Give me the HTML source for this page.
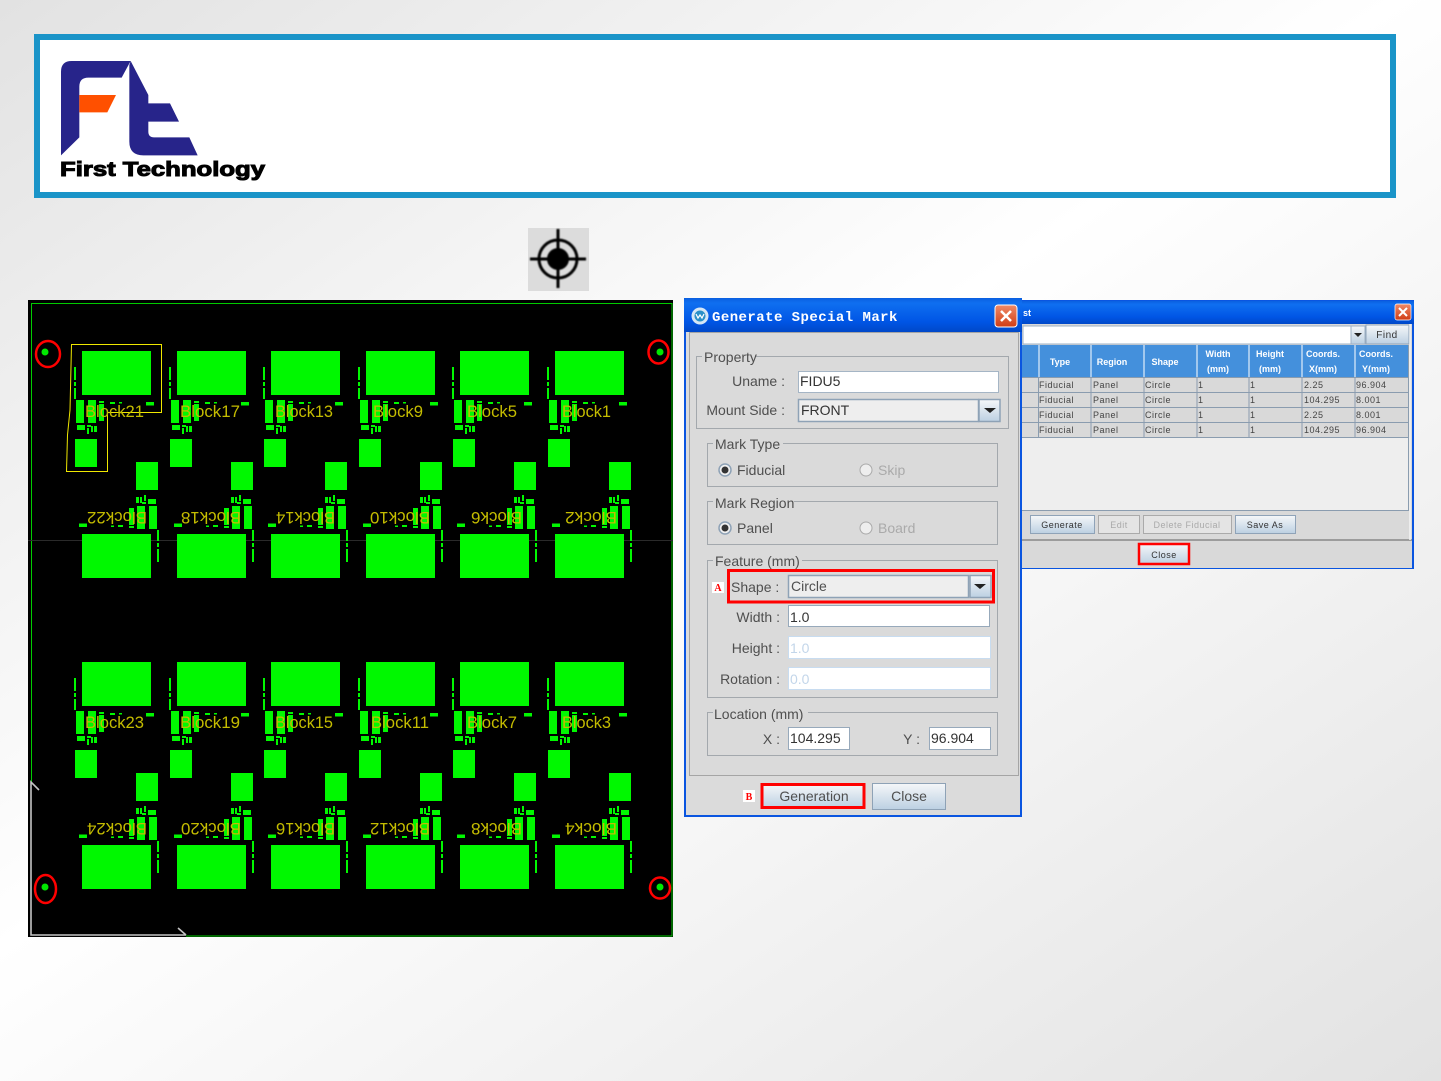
<!DOCTYPE html>
<html><head><meta charset="utf-8"><title>First Technology</title>
<style>
html,body{margin:0;padding:0;width:1441px;height:1081px;overflow:hidden;background:#fff}
svg{display:block}
text{font-family:"Liberation Sans",sans-serif}
.d{font-size:14px;fill:#4f4f4f}
.o{font-size:14px;fill:#333}
.g{font-size:14px;fill:#aaa}
.h{font-size:9px;font-weight:bold;fill:#fff;text-anchor:middle}
.c{font-size:9px;fill:#444;letter-spacing:.5px}
.b{font-size:9px;fill:#333;text-anchor:middle;letter-spacing:.5px}
.y{font-size:17px;fill:#c4bc00}
</style></head><body>
<svg width="1441" height="1081" viewBox="0 0 1441 1081" xmlns="http://www.w3.org/2000/svg">
<defs>
<linearGradient id="bg" gradientUnits="userSpaceOnUse" x1="0" y1="0" x2="957" y2="1412">
<stop offset="0" stop-color="#e2e2e2"/><stop offset=".46" stop-color="#fff"/><stop offset="1" stop-color="#e2e2e2"/>
</linearGradient>
<linearGradient id="tb" x1="0" y1="0" x2="0" y2="1"><stop offset="0" stop-color="#0a5fe0"/><stop offset=".15" stop-color="#0f6ff0"/><stop offset=".7" stop-color="#0055e5"/><stop offset="1" stop-color="#0048c8"/></linearGradient>
<linearGradient id="bt" x1="0" y1="0" x2="0" y2="1"><stop offset="0" stop-color="#f5f7f9"/><stop offset="1" stop-color="#bcd0e2"/></linearGradient>
<linearGradient id="cl" x1="0" y1="0" x2="0" y2="1"><stop offset="0" stop-color="#f08a68"/><stop offset="1" stop-color="#d03c14"/></linearGradient>
<filter id="bl"><feGaussianBlur stdDeviation=".9"/></filter>
<g id="half" fill="#00f800">
<rect x="0" y="0" width="69" height="44"/>
<rect x="-8" y="16" width="2" height="13"/><rect x="-8" y="31" width="2" height="4"/><rect x="-8" y="37" width="2" height="11"/>
<rect x="-6" y="49" width="8" height="23"/><rect x="6" y="49" width="8" height="23"/><rect x="17" y="53" width="5" height="17"/>
<rect x="17" y="50" width="5" height="2"/><rect x="28" y="51" width="5" height="2"/><rect x="37" y="51" width="3" height="1.500"/><rect x="64" y="51" width="8" height="3.500"/>
<rect x="-5" y="74" width="8" height="5"/><rect x="5" y="74" width="4" height="2"/><rect x="5" y="77" width="2" height="6"/><rect x="9" y="75" width="2" height="6"/><rect x="12" y="75" width="3" height="6"/>
<rect x="-7" y="88" width="22" height="28"/>
</g>
<g id="cell"><use href="#half"/><use href="#half" transform="rotate(180 34.500 113.500)"/></g>
</defs>

<rect width="1441" height="1081" fill="url(#bg)"/>

<!-- banner -->
<rect x="37" y="37" width="1356" height="158" fill="#fff" stroke="#1a94c8" stroke-width="6"/>
<g transform="translate(30 30) scale(.33333)">
<path fill="#27248a" d="M93 376V125Q93 93 125 93H302L275 143H175Q148 143 148 170V322Z"/>
<path fill="#27248a" d="M302 93L355 195V220H420L447 275H355V305Q355 322 372 322H478L503 376H340Q298 376 298 335V105Z"/>
<path fill="#ff5000" d="M148 195H258L232 247H148Z"/>
</g>
<text x="60" y="176" font-size="20" font-weight="bold" fill="#000" stroke="#000" stroke-width="1" textLength="205" lengthAdjust="spacingAndGlyphs">First Technology</text>

<!-- crosshair -->
<rect x="528" y="228" width="61" height="63" fill="#dcdcdc"/>
<g filter="url(#bl)" stroke="#000" fill="none">
<circle cx="558" cy="259" r="19" stroke-width="3"/>
<circle cx="558" cy="259" r="11" fill="#000" stroke="none"/>
<path d="M530 259H586M558 229V288" stroke-width="3"/>
</g>

<!-- PCB -->
<rect x="28" y="300" width="645" height="637" fill="#000"/>
<path d="M31.500 782V303.500H672V936H186" fill="none" stroke="#0c0" stroke-width="1"/>
<path d="M28 540.500H673" stroke="#2a2a2a" stroke-width="1"/>
<path d="M39 790L31 782V935H186M178 928L186 935" fill="none" stroke="#c4c4c4" stroke-width="1.600"/>
<use href="#cell" x="82" y="351"/><use href="#cell" x="177" y="351"/><use href="#cell" x="271" y="351"/><use href="#cell" x="366" y="351"/><use href="#cell" x="460" y="351"/><use href="#cell" x="555" y="351"/>
<use href="#cell" x="82" y="662"/><use href="#cell" x="177" y="662"/><use href="#cell" x="271" y="662"/><use href="#cell" x="366" y="662"/><use href="#cell" x="460" y="662"/><use href="#cell" x="555" y="662"/>
<path d="M71.500 344.500H161.500V412.500H107.500V471.500H66.500L67.500 435L70 410Z" fill="none" stroke="#f0e800" stroke-width="1"/>
<g fill="#00e800"><circle cx="45" cy="352" r="3.500"/><circle cx="660" cy="352" r="3.500"/><circle cx="45" cy="887" r="3.500"/><circle cx="660" cy="887" r="3.500"/></g>
<g fill="none" stroke="#f00" stroke-width="2.500"><ellipse cx="48" cy="354" rx="12" ry="13"/><ellipse cx="658.500" cy="352" rx="10" ry="11.500"/><ellipse cx="45.500" cy="889" rx="10.500" ry="14"/><ellipse cx="660" cy="888" rx="10" ry="10.500"/></g>
<g>
<text class="y" x="85" y="417" textLength="59" lengthAdjust="spacingAndGlyphs">Block21</text>
<text class="y" x="180" y="417" textLength="60" lengthAdjust="spacingAndGlyphs">Block17</text>
<text class="y" x="275" y="417" textLength="58" lengthAdjust="spacingAndGlyphs">Block13</text>
<text class="y" x="373" y="417" textLength="50" lengthAdjust="spacingAndGlyphs">Block9</text>
<text class="y" x="467" y="417" textLength="50" lengthAdjust="spacingAndGlyphs">Block5</text>
<text class="y" x="562" y="417" textLength="49" lengthAdjust="spacingAndGlyphs">Block1</text>
<text class="y" x="85" y="728" textLength="59" lengthAdjust="spacingAndGlyphs">Block23</text>
<text class="y" x="180" y="728" textLength="60" lengthAdjust="spacingAndGlyphs">Block19</text>
<text class="y" x="275" y="728" textLength="58" lengthAdjust="spacingAndGlyphs">Block15</text>
<text class="y" x="371" y="728" textLength="58" lengthAdjust="spacingAndGlyphs">Block11</text>
<text class="y" x="467" y="728" textLength="50" lengthAdjust="spacingAndGlyphs">Block7</text>
<text class="y" x="562" y="728" textLength="49" lengthAdjust="spacingAndGlyphs">Block3</text>
<text class="y" transform="rotate(180 147 512)" x="147" y="512" textLength="60" lengthAdjust="spacingAndGlyphs">Block22</text>
<text class="y" transform="rotate(180 241 512)" x="241" y="512" textLength="60" lengthAdjust="spacingAndGlyphs">Block18</text>
<text class="y" transform="rotate(180 335 512)" x="335" y="512" textLength="59" lengthAdjust="spacingAndGlyphs">Block14</text>
<text class="y" transform="rotate(180 430 512)" x="430" y="512" textLength="60" lengthAdjust="spacingAndGlyphs">Block10</text>
<text class="y" transform="rotate(180 522 512)" x="522" y="512" textLength="51" lengthAdjust="spacingAndGlyphs">Block6</text>
<text class="y" transform="rotate(180 617 512)" x="617" y="512" textLength="52" lengthAdjust="spacingAndGlyphs">Block2</text>
<text class="y" transform="rotate(180 147 823)" x="147" y="823" textLength="60" lengthAdjust="spacingAndGlyphs">Block24</text>
<text class="y" transform="rotate(180 241 823)" x="241" y="823" textLength="60" lengthAdjust="spacingAndGlyphs">Block20</text>
<text class="y" transform="rotate(180 335 823)" x="335" y="823" textLength="59" lengthAdjust="spacingAndGlyphs">Block16</text>
<text class="y" transform="rotate(180 430 823)" x="430" y="823" textLength="60" lengthAdjust="spacingAndGlyphs">Block12</text>
<text class="y" transform="rotate(180 522 823)" x="522" y="823" textLength="51" lengthAdjust="spacingAndGlyphs">Block8</text>
<text class="y" transform="rotate(180 617 823)" x="617" y="823" textLength="52" lengthAdjust="spacingAndGlyphs">Block4</text>
</g>

<!-- right window -->
<rect x="1022" y="300" width="392" height="269" fill="#0a55e0"/>
<rect x="1022" y="301" width="392" height="23" fill="url(#tb)"/>
<text x="1023" y="316" font-size="9" font-weight="bold" fill="#fff">st</text>
<rect x="1395" y="304" width="16" height="16" rx="2" fill="url(#cl)" stroke="#fff" stroke-width=".7"/>
<path d="M1399 308L1407 316M1407 308L1399 316" stroke="#fff" stroke-width="2"/>
<rect x="1022" y="324" width="390" height="244" fill="#d9d9d9"/>
<rect x="1023" y="326" width="328" height="18" fill="#fff" stroke="#9db0c4"/>
<rect x="1351" y="326" width="14" height="18" fill="url(#bt)" stroke="#9db0c4"/>
<path d="M1354 333H1362L1358 337Z" fill="#222"/>
<rect x="1366" y="325" width="43" height="19" fill="url(#bt)" stroke="#8fa3b8"/>
<text class="b" x="1387" y="338" style="font-size:10px">Find</text>
<rect x="1022" y="345" width="386" height="165" fill="#eee"/>
<path d="M1408.500 345V510.500H1022" fill="none" stroke="#8a9caf"/>
<rect x="1022" y="345" width="386" height="32" fill="#4490dc"/>
<rect x="1022" y="377" width="386" height="60" fill="#d9d9d9"/>
<path d="M1039 345V377M1091 345V377M1144 345V377M1197 345V377M1249 345V377M1302 345V377M1355 345V377" stroke="#fff" stroke-width="1"/>
<path d="M1038.500 377V437M1091 377V437M1144 377V437M1197 377V437M1249 377V437M1302 377V437M1355 377V437M1022 377.500H1408M1022 392.500H1408M1022 407.500H1408M1022 422.500H1408M1022 437.500H1408" stroke="#8a9caf" stroke-width="1" fill="none"/>
<text class="h" x="1060" y="365">Type</text><text class="h" x="1112" y="365">Region</text><text class="h" x="1165" y="365">Shape</text>
<text class="h" x="1218" y="357">Width</text><text class="h" x="1218" y="372">(mm)</text>
<text class="h" x="1270" y="357">Height</text><text class="h" x="1270" y="372">(mm)</text>
<text class="h" x="1323" y="357">Coords.</text><text class="h" x="1323" y="372">X(mm)</text>
<text class="h" x="1376" y="357">Coords.</text><text class="h" x="1376" y="372">Y(mm)</text>
<text class="c" x="1039" y="388">Fiducial</text><text class="c" x="1093" y="388">Panel</text><text class="c" x="1145" y="388">Circle</text><text class="c" x="1198" y="388">1</text><text class="c" x="1250" y="388">1</text><text class="c" x="1304" y="388">2.25</text><text class="c" x="1356" y="388">96.904</text>
<text class="c" x="1039" y="403">Fiducial</text><text class="c" x="1093" y="403">Panel</text><text class="c" x="1145" y="403">Circle</text><text class="c" x="1198" y="403">1</text><text class="c" x="1250" y="403">1</text><text class="c" x="1304" y="403">104.295</text><text class="c" x="1356" y="403">8.001</text>
<text class="c" x="1039" y="418">Fiducial</text><text class="c" x="1093" y="418">Panel</text><text class="c" x="1145" y="418">Circle</text><text class="c" x="1198" y="418">1</text><text class="c" x="1250" y="418">1</text><text class="c" x="1304" y="418">2.25</text><text class="c" x="1356" y="418">8.001</text>
<text class="c" x="1039" y="433">Fiducial</text><text class="c" x="1093" y="433">Panel</text><text class="c" x="1145" y="433">Circle</text><text class="c" x="1198" y="433">1</text><text class="c" x="1250" y="433">1</text><text class="c" x="1304" y="433">104.295</text><text class="c" x="1356" y="433">96.904</text>
<rect x="1030.500" y="515.500" width="64" height="18" fill="url(#bt)" stroke="#8fa3b8"/><text class="b" x="1062" y="528">Generate</text>
<rect x="1098.500" y="515.500" width="41" height="18" fill="#e4e4e4" stroke="#aaa"/><text class="b" x="1119" y="528" style="fill:#aaa">Edit</text>
<rect x="1143.500" y="515.500" width="88" height="18" fill="#e4e4e4" stroke="#aaa"/><text class="b" x="1187" y="528" style="fill:#aaa">Delete Fiducial</text>
<rect x="1235.500" y="515.500" width="60" height="18" fill="url(#bt)" stroke="#8fa3b8"/><text class="b" x="1265" y="528">Save As</text>
<path d="M1022 540H1412" stroke="#888" stroke-width="1.500"/>
<path d="M1410 324V540" stroke="#f4f4f4" stroke-width="1.500"/>
<rect x="1139" y="544" width="50" height="20" fill="url(#bt)" stroke="#f00" stroke-width="2.500"/>
<text class="b" x="1164" y="558">Close</text>

<!-- main dialog -->
<rect x="684" y="298" width="338" height="519" fill="#0a55e0"/>
<rect x="684" y="298" width="338" height="34" fill="url(#tb)"/>
<circle cx="700" cy="316" r="8.500" fill="#d5e6f5"/><circle cx="700" cy="316" r="5.500" fill="#2a90c8"/>
<path d="M696 314L698 318L700 315L702 318L704 314" fill="none" stroke="#fff" stroke-width="1.200"/>
<text x="712" y="321" font-size="14" font-weight="bold" fill="#fff" letter-spacing=".45" style="font-family:'Liberation Mono',monospace">Generate Special Mark</text>
<rect x="995" y="305" width="22" height="22" rx="3" fill="url(#cl)" stroke="#fff"/>
<path d="M1001 311L1011 321M1011 311L1001 321" stroke="#fff" stroke-width="2.500"/>
<rect x="686" y="332" width="334" height="483" fill="#dbdbdb"/>
<rect x="689.500" y="332.500" width="329" height="443" fill="#dadada" stroke="#a5a5a5"/>

<g fill="none" stroke="#a3a8ad">
<rect x="696.500" y="356.500" width="312" height="72"/>
<rect x="707.500" y="443.500" width="290" height="43"/>
<rect x="707.500" y="501.500" width="290" height="43"/>
<rect x="707.500" y="560.500" width="290" height="137"/>
<rect x="707.500" y="712.500" width="290" height="43"/>
</g>
<g fill="#dadada">
<rect x="702" y="352" width="54" height="10"/><rect x="713" y="438" width="70" height="10"/><rect x="713" y="496" width="81" height="10"/><rect x="713" y="555" width="89" height="10"/><rect x="713" y="707" width="95" height="10"/>
</g>
<text class="d" x="704" y="362">Property</text>
<text class="d" x="715" y="449">Mark Type</text>
<text class="d" x="715" y="508">Mark Region</text>
<text class="d" x="715" y="566">Feature (mm)</text>
<text class="d" x="714" y="719">Location (mm)</text>

<text class="d" x="785" y="386" text-anchor="end">Uname :</text>
<rect x="798.500" y="371.500" width="200" height="21" fill="#fff" stroke="#a5b5c5"/>
<text class="o" x="800" y="386">FIDU5</text>
<text class="d" x="785" y="415" text-anchor="end">Mount Side :</text>
<rect x="798.500" y="399.500" width="180" height="22" fill="#eee" stroke="#8ea2b6" stroke-width="1.500"/>
<rect x="979" y="399.500" width="21" height="22" fill="url(#bt)" stroke="#8ea2b6" stroke-width="1.500"/>
<path d="M984 408H996L990 413Z" fill="#222"/>
<text class="o" x="801" y="415">FRONT</text>

<circle cx="725" cy="470" r="6" fill="#f0f0f0" stroke="#8ea2b6" stroke-width="1.500"/><circle cx="725" cy="470" r="3.500" fill="#333"/>
<text class="d" x="737" y="475">Fiducial</text>
<circle cx="866" cy="470" r="6" fill="#eee" stroke="#aaa"/><text class="g" x="878" y="475">Skip</text>
<circle cx="725" cy="528" r="6" fill="#f0f0f0" stroke="#8ea2b6" stroke-width="1.500"/><circle cx="725" cy="528" r="3.500" fill="#333"/>
<text class="d" x="737" y="533">Panel</text>
<circle cx="866" cy="528" r="6" fill="#eee" stroke="#aaa"/><text class="g" x="878" y="533">Board</text>

<rect x="712" y="582" width="12" height="11" fill="#fff"/>
<text x="718" y="591" font-size="10" font-weight="bold" fill="#f00" text-anchor="middle" style="font-family:'Liberation Serif',serif">A</text>
<text class="d" x="731" y="592">Shape :</text>
<rect x="788.500" y="575.500" width="180" height="22" fill="#eee" stroke="#8ea2b6" stroke-width="1.500"/>
<rect x="970" y="575.500" width="21" height="22" fill="url(#bt)" stroke="#8ea2b6" stroke-width="1.500"/>
<path d="M974 584H986L980 589Z" fill="#222"/>
<text class="d" x="791" y="591">Circle</text>
<rect x="728.500" y="570.500" width="265" height="31.500" fill="none" stroke="#f00" stroke-width="3"/>

<text class="d" x="780" y="622" text-anchor="end">Width :</text>
<rect x="788.500" y="605.500" width="201" height="21" fill="#fff" stroke="#97a9bb"/>
<text class="o" x="790" y="622">1.0</text>
<text class="d" x="780" y="653" text-anchor="end">Height :</text>
<rect x="788.500" y="636.500" width="202" height="22" fill="#fff" stroke="#c8dcf0"/>
<text x="790" y="653" font-size="14" fill="#c3d6ea">1.0</text>
<text class="d" x="780" y="684" text-anchor="end">Rotation :</text>
<rect x="788.500" y="667.500" width="202" height="22" fill="#fff" stroke="#c8dcf0"/>
<text x="790" y="684" font-size="14" fill="#c3d6ea">0.0</text>

<text class="d" x="780" y="744" text-anchor="end">X :</text>
<rect x="788.500" y="727.500" width="61" height="22" fill="#fff" stroke="#97a9bb"/>
<text class="o" x="790" y="743">104.295</text>
<text class="d" x="920" y="744" text-anchor="end">Y :</text>
<rect x="929.500" y="727.500" width="61" height="22" fill="#fff" stroke="#97a9bb"/>
<text class="o" x="931" y="743">96.904</text>

<rect x="743" y="790" width="12" height="12" fill="#fff"/>
<text x="749" y="800" font-size="10" font-weight="bold" fill="#f00" text-anchor="middle" style="font-family:'Liberation Serif',serif">B</text>
<rect x="762" y="784.500" width="102" height="23" fill="url(#bt)" stroke="#f00" stroke-width="3"/>
<text class="d" x="814" y="801" text-anchor="middle">Generation</text>
<rect x="872.500" y="783.500" width="73" height="26" fill="url(#bt)" stroke="#8ea2b6"/>
<text class="d" x="909" y="801" text-anchor="middle">Close</text>
</svg>
</body></html>
